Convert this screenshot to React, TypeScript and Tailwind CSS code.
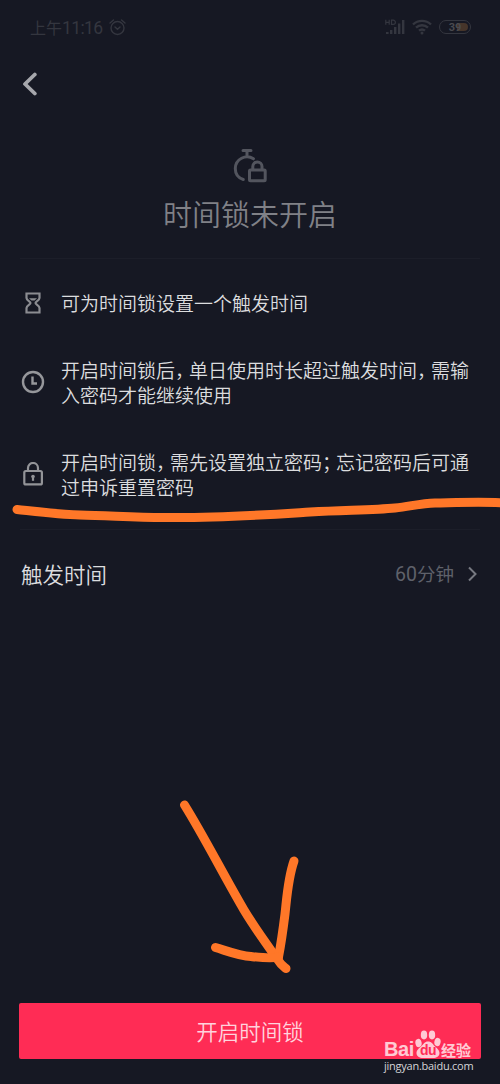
import type { ReactNode } from "react";

const Comma = ({ mark = "，" }: { mark?: string }) => (
  <span className="tracking-[-5px]">{mark}</span>
);

const StatusBar = () => {
  return (
    <div className="flex h-[54px] items-center justify-between pl-[30px] pr-[29px] text-[#34363f]">
      <div className="flex items-center gap-[6px]">
        <span className="whitespace-nowrap text-[16px] leading-[20px]">
          上午<span className="font-['Roboto'] text-[17.5px] tracking-[-0.6px]">11:16</span>
        </span>
        <svg width="17" height="17" viewBox="0 0 17 17" fill="none" stroke="currentColor" strokeWidth="1.4">
          <circle cx="8.5" cy="9" r="6.5" />
          <path d="M1 4 4.5 1M16 4l-3.5-3M6 8l2.5 2.3L11 8" strokeLinecap="round" />
        </svg>
      </div>
      <div className="flex items-center">
        <svg width="20" height="16" viewBox="0 0 20 16" fill="currentColor">
          <path d="M1 13h2.6v2H1zM5 11h2.4v4H5zM9 8h2.4v7H9zM13 4.500h2.400v10.500H13zM17 1h2.400v14H17z" />
          <path d="M.8.8v5M4.200.8v5M.8 3.300h3.400M6.500 1.200v4.200h1.800a2.100 2.100 0 0 0 0-4.200z" fill="none" stroke="currentColor" strokeWidth="1.2" />
        </svg>
        <svg className="ml-[7px]" width="20" height="16" viewBox="0 0 20 16" fill="none" stroke="currentColor" strokeWidth="2.4">
          <path d="M1 5.500a13 13 0 0 1 18 0M4 8.700a8.700 8.700 0 0 1 12 0M7 11.700a4.600 4.600 0 0 1 6 0" />
          <circle cx="10" cy="14" r="1.500" fill="currentColor" stroke="none" />
        </svg>
        <div className="relative ml-[7px] flex h-[14px] w-[32px] items-center justify-center rounded-full border-[1.5px] border-[#34363f]">
          <div className="absolute right-[2px] top-[2px] h-[8px] w-[11px] rounded-r-full bg-[#46352a]" />
          <span className="relative font-['Roboto'] text-[11px] font-bold leading-none text-[#4a4a50]">39</span>
        </div>
      </div>
    </div>
  );
};

const HourglassIcon = () => (
  <svg width="24" height="24" viewBox="0 0 24 24" fill="none" stroke="#8b8c91" strokeWidth="2.2">
    <path d="M5.500 2.500h13v4.500c0 2.500-4 3.500-4 5s4 2.500 4 5v4.500h-13V17c0-2.500 4-3.500 4-5s-4-2.500-4-5z" />
    <path d="M8 7.200h8l-2.500 2.300h-3z" fill="#8b8c91" stroke="none" />
  </svg>
);

const ClockIcon = () => (
  <svg width="24" height="24" viewBox="0 0 24 24" fill="none" stroke="#96979b" strokeWidth="2.400">
    <circle cx="12" cy="12" r="10" />
    <path d="M11.500 6.500v7H16" />
  </svg>
);

const LockIcon = () => (
  <svg width="24" height="24" viewBox="0 0 24 24" fill="none" stroke="#939498" strokeWidth="2.2">
    <rect x="3.300" y="9" width="17.600" height="13.400" rx="1.500" />
    <path d="M7 9V6a5 5 0 0 1 10 0v3" />
    <path d="M12 14.500v4.300" />
    <circle cx="12" cy="14.500" r="1.800" fill="#939498" stroke="none" />
  </svg>
);

const InfoRow = ({ icon, children }: { icon: ReactNode; children: ReactNode }) => (
  <div className="flex items-center gap-4">
    <div className="w-6 shrink-0">{icon}</div>
    <p className="whitespace-nowrap text-[19px] font-[350] leading-[25px] text-[#dcdddf]">{children}</p>
  </div>
);

const Watermark = () => (
  <div className="absolute left-[384px] top-[1030px] w-[92px] text-white">
    <div className="flex h-[28px] items-end opacity-75">
      <span className="w-[31px] font-['Liberation_Sans'] text-[20px] font-bold leading-[18px] tracking-[-0.4px]">Bai</span>
      <div className="relative h-[28px] w-[26px]">
        <svg className="block" width="26" height="28" viewBox="0 0 26 28" fill="currentColor">
          <ellipse cx="3.500" cy="13" rx="3.100" ry="4.200" transform="rotate(-12 3.500 13)" />
          <ellipse cx="9" cy="5" rx="3.200" ry="4.400" />
          <ellipse cx="17" cy="5" rx="3.200" ry="4.400" />
          <ellipse cx="22.500" cy="12" rx="3.100" ry="4.200" transform="rotate(12 22.500 12)" />
          <path d="M13 11.500c3.500 0 4.500 2.200 6.500 4.500 2.200 2 5 4 5 7 0 3.500-3 5-6.500 5H8c-3.500 0-6.500-1.500-6.500-5 0-3 2.800-5 5-7s3-4.500 6.500-4.500z" />
        </svg>
        <span className="absolute left-[5px] top-[13px] font-['Liberation_Sans'] text-[14px] font-bold leading-[14px] tracking-[-0.5px] text-[#ff2c55]">du</span>
      </div>
      <span className="text-[15px] font-bold leading-[17px]">经验</span>
    </div>
    <div className="mt-[2px] font-['Open_Sans'] text-[11px] leading-[12px] tracking-[-0.25px] text-[#d5d5d8]">jingyan.baidu.com</div>
  </div>
);

export default function App() {
  return (
    <div className="relative flex h-[1084px] w-[500px] flex-col overflow-hidden bg-[#161823] font-['Noto_Sans_CJK_SC',sans-serif]">
      <StatusBar />

      <header className="flex h-[60px] items-center pl-[22px]">
        <svg width="16" height="24" viewBox="0 0 16 24" fill="none" stroke="#a6a7ac" strokeWidth="3.800" strokeLinecap="round" strokeLinejoin="round">
          <path d="M12.800 2.500 3 12l9.800 9.500" />
        </svg>
      </header>

      <section className="mx-5 flex h-[145px] flex-col items-center border-b border-[#1c1e29] pt-[34px]">
        <svg width="34" height="35" viewBox="0 0 34 35" fill="none" stroke="#53555e" strokeWidth="3" strokeLinecap="round">
          <path d="M10 2.500h8M14 3v4M20.500 10.800A11.800 11.800 0 0 0 2.300 20.500C2.300 26 5.500 30 10.300 31.500" />
          <rect x="16.500" y="22" width="15.700" height="10.700" rx="1" />
          <path d="M19.800 21.500v-3a4.600 4.600 0 0 1 9.200 0v3" />
        </svg>
        <h1 className="mt-[10px] text-[29px] font-[350] leading-[40px] text-[#808187]">时间锁未开启</h1>
      </section>

      <section className="mx-5 flex h-[271px] flex-col border-b border-[#1c1e29] pl-px pt-[31px]">
        <InfoRow icon={<HourglassIcon />}>可为时间锁设置一个触发时间</InfoRow>
        <div className="mt-[42px]">
          <InfoRow icon={<ClockIcon />}>
            开启时间锁后<Comma />单日使用时长超过触发时间<Comma />需输
            <br />
            入密码才能继续使用
          </InfoRow>
        </div>
        <div className="mt-[42px]">
          <InfoRow icon={<LockIcon />}>
            开启时间锁<Comma />需先设置独立密码<Comma mark="；" />忘记密码后可通
            <br />
            过申诉重置密码
          </InfoRow>
        </div>
      </section>

      <section className="flex h-[87px] items-center justify-between pl-[21px] pr-[22px]">
        <span className="text-[21.5px] font-[350] leading-[30px] text-[#dcdddf]">触发时间</span>
        <div className="flex items-center gap-[13px] text-[#5f616a]">
          <span className="text-[18.5px] leading-[28px]">
            <span className="font-['Roboto'] text-[19.5px]">60</span>分钟
          </span>
          <svg width="11" height="16" viewBox="0 0 11 16" fill="none" stroke="#777981" strokeWidth="2">
            <path d="m2 1.500 6.500 6.500L2 14.500" />
          </svg>
        </div>
      </section>

      <button className="mx-[19px] mb-[25px] mt-auto h-[56px] rounded-[2px] bg-[#ff2c55] text-[21.5px] font-[350] text-[#ffd3dd]">
        <span className="block leading-[56px]">开启时间锁</span>
      </button>

      <Watermark />

      {/* hand drawn marks on top of the page */}
      <svg className="pointer-events-none absolute inset-0" width="500" height="1084" viewBox="0 0 500 1084" fill="none" stroke="#ff7728" strokeWidth="9" strokeLinecap="round" strokeLinejoin="round">
        <path d="M17 509.500C40 512 60 514.500 80 515C110 515.500 140 518 170 517.500C220 518 270 514.500 310 512C350 510 375 510 395 508C410 506.500 420 503.500 435 503C460 502.500 485 501.500 504 503" />
        <path d="M184.500 805C205 838 224 876 244 910C256 930 268 946 278 960C281 965 283 966 286 968.500" />
        <path d="M294 861C288 878 287 896 285 914C283 930 281 944 278.500 957" />
        <path d="M215.500 947.500C230 952 240 956 251 956.500C260 957.500 272 959 278.500 957" />
      </svg>
    </div>
  );
}
